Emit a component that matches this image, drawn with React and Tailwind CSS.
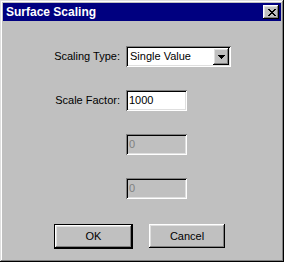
const raised =
  'shadow-[inset_-1px_-1px_#000,inset_1px_1px_#fff,inset_-2px_-2px_#808080,inset_2px_2px_#dfdfdf]';
const sunken =
  'shadow-[inset_1px_1px_#808080,inset_-1px_-1px_#fff,inset_2px_2px_#000,inset_-2px_-2px_#dfdfdf]';

const CloseGlyph = () => (
  <svg width="8" height="7" viewBox="0 0 8 7" shapeRendering="crispEdges">
    <path
      d="M0 0h2v1H0zM6 0h2v1H6zM1 1h2v1H1zM5 1h2v1H5zM2 2h4v1H2zM3 3h2v1H3zM2 4h4v1H2zM1 5h2v1H1zM5 5h2v1H5zM0 6h2v1H0zM6 6h2v1H6z"
      fill="#000"
    />
  </svg>
);

const Field = ({ value, disabled }) => (
  <div
    className={`w-[61px] h-[21px] flex items-center pl-[3px] ${sunken} ${
      disabled ? 'bg-[#c0c0c0] text-[#808080]' : 'bg-white text-black'
    }`}
  >
    {value}
  </div>
);

const App = () => {
  return (
    <div
      className={`w-[284px] h-[262px] bg-[#c0c0c0] p-[3px] flex flex-col text-[11px] leading-none text-black font-['Liberation_Sans',Arial,sans-serif] shadow-[inset_-1px_-1px_#000,inset_1px_1px_#dfdfdf,inset_-2px_-2px_#808080,inset_2px_2px_#fff]`}
    >
      {/* title bar */}
      <div className="h-[18px] bg-[#000080] flex items-center justify-between pl-[3px] pr-[2px]">
        <span className="text-white font-bold text-[12px] leading-none">
          Surface Scaling
        </span>
        <div
          className={`w-[16px] h-[14px] bg-[#c0c0c0] flex items-center justify-center pl-[1px] ${raised}`}
        >
          <CloseGlyph />
        </div>
      </div>

      <div className="flex-1 pt-[25px]">
        <div className="grid grid-cols-[117px_auto] gap-x-[6px] gap-y-[23px] items-center">
          <span className="text-right">Scaling Type:</span>
          <div
            className={`w-[105px] h-[21px] bg-white flex items-center pl-[4px] pr-[2px] ${sunken}`}
          >
            <span>Single Value</span>
            <div
              className={`ml-auto w-[16px] h-[17px] bg-[#c0c0c0] flex items-center justify-center ${raised}`}
            >
              <svg width="7" height="4" viewBox="0 0 7 4" shapeRendering="crispEdges">
                <path d="M0 0h7v1H0zM1 1h5v1H1zM2 2h3v1H2zM3 3h1v1H3z" fill="#000" />
              </svg>
            </div>
          </div>

          <span className="text-right">Scale Factor:</span>
          <Field value="1000" />

          <span />
          <Field value="0" disabled />

          <span />
          <Field value="0" disabled />
        </div>

        <div className="flex items-start gap-[16px] pl-[51px] mt-[25px]">
          <button className="w-[79px] h-[25px] border border-black bg-[#c0c0c0] shadow-[inset_-1px_-1px_#000,inset_1px_1px_#fff,inset_-2px_-2px_#808080,inset_2px_2px_#dfdfdf]">
            OK
          </button>
          <button
            className={`w-[76px] h-[24px] bg-[#c0c0c0] ${raised}`}
          >
            Cancel
          </button>
        </div>
      </div>
    </div>
  );
};

export default App;
